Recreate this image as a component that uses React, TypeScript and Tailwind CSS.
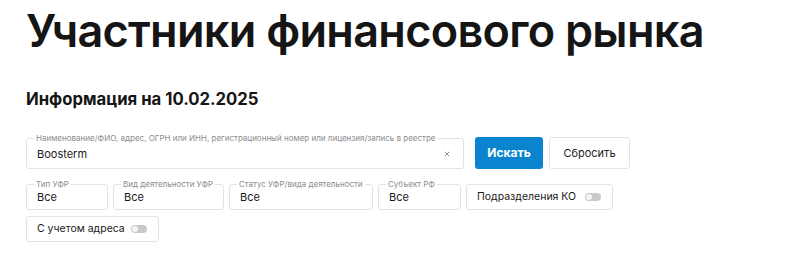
import { X } from "lucide-react";

const font = { fontFamily: "Inter, 'Noto Sans', sans-serif" };

function Toggle() {
  return (
    <span className="inline-flex h-[8px] w-[16px] shrink-0 items-center rounded-full bg-[#c9c9cc]">
      <span className="ml-[1px] h-[6px] w-[6px] rounded-full bg-[#f5f5f6]" />
    </span>
  );
}

function Field({ label, value, width }: { label: string; value: string; width: string }) {
  return (
    <div className={`relative flex h-[26px] items-center rounded-[3px] border border-[#e3e3e6] pl-[10px] ${width}`}>
      <span className="absolute -top-[6px] left-[7px] bg-white px-[2px] text-[8px] leading-[10px] text-[#8c8c90]">
        {label}
      </span>
      <span className="text-[11px] text-[#1a1a1a]">{value}</span>
    </div>
  );
}

function SwitchBox({ label, width }: { label: string; width: string }) {
  return (
    <div className={`flex h-[26px] items-center justify-between rounded-[3px] border border-[#e3e3e6] pl-[10px] pr-[11px] ${width}`}>
      <span className="text-[10.5px] text-[#1a1a1a]">{label}</span>
      <Toggle />
    </div>
  );
}

export default function App() {
  return (
    <div className="h-[277px] w-[800px] overflow-hidden bg-white px-[26px] pt-[4px]" style={font}>
      <h1 className="whitespace-nowrap text-[45px] font-semibold leading-[54px] tracking-[-0.7px] text-[#151515]">
        Участники финансового рынка
      </h1>

      <h2 className="mt-[30px] text-[16.7px] font-bold leading-[22px] text-[#151515]">
        Информация на 10.02.2025
      </h2>

      <div className="mt-[27px] flex items-end gap-[11px]">
        <div className="relative flex h-[31px] w-[438px] items-center justify-between rounded-[3px] border border-[#e3e3e6] pl-[10px] pr-[12px]">
          <span className="absolute -top-[6px] left-[7px] bg-white px-[2px] text-[8px] leading-[10px] text-[#8c8c90]">
            Наименование/ФИО, адрес, ОГРН или ИНН, регистрационный номер или лицензия/запись в реестре
          </span>
          <span className="pt-[1px] text-[11px] text-[#1a1a1a]">Boosterm</span>
          <X className="h-[8px] w-[8px] text-[#7a7a7e]" strokeWidth={2.5} />
        </div>
        <div className="flex gap-[6px]">
          <button className="h-[32px] w-[68px] rounded-[3px] bg-[#0a84cf] text-[12px] font-bold text-white">
            Искать
          </button>
          <button className="h-[32px] w-[81px] rounded-[3px] border border-[#e3e3e6] bg-white text-[11px] text-[#222]">
            Сбросить
          </button>
        </div>
      </div>

      <div className="mt-[15px] flex max-w-[640px] flex-wrap gap-x-[5px] gap-y-[6px]">
        <Field label="Тип УФР" value="Все" width="w-[82px]" />
        <Field label="Вид деятельности УФР" value="Все" width="w-[111px]" />
        <Field label="Статус УФР/вида деятельности" value="Все" width="w-[144px]" />
        <Field label="Субъект РФ" value="Все" width="w-[83px]" />
        <SwitchBox label="Подразделения КО" width="w-[147px]" />
        <SwitchBox label="С учетом адреса" width="w-[133px]" />
      </div>
    </div>
  );
}
